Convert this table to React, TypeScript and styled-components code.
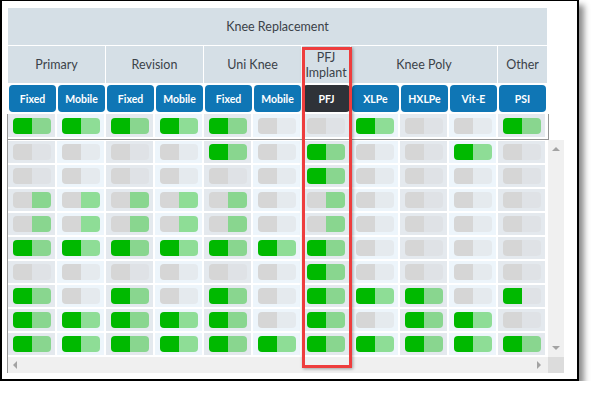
import React from 'react';
import styled, { createGlobalStyle } from 'styled-components';

type Mark = 'G' | 'O' | 'R' | 'L';

interface Group {
  label: string;
  span: number;
}

interface Column {
  label: string;
  dark?: boolean;
}

const groups: Group[] = [
  { label: 'Primary', span: 2 },
  { label: 'Revision', span: 2 },
  { label: 'Uni Knee', span: 2 },
  { label: 'PFJ Implant', span: 1 },
  { label: 'Knee Poly', span: 3 },
  { label: 'Other', span: 1 },
];

const columns: Column[] = [
  { label: 'Fixed' },
  { label: 'Mobile' },
  { label: 'Fixed' },
  { label: 'Mobile' },
  { label: 'Fixed' },
  { label: 'Mobile' },
  { label: 'PFJ', dark: true },
  { label: 'XLPe' },
  { label: 'HXLPe' },
  { label: 'Vit-E' },
  { label: 'PSI' },
];

// G = both on, O = off, R = only second half, L = only first half
const pinnedRow = 'GGGGGOOGOOG';
const rows = [
  'OOOOGOGOOGO',
  'OOOOOOGOOOO',
  'RRRRROROOOO',
  'RRRRROROOOO',
  'GGGGGGGOOOO',
  'OOOOOOGOOOO',
  'GOGOGOGGGOL',
  'GGGGGOGOGGO',
  'GGGGGGGGGGG',
];

const GlobalStyle = createGlobalStyle`
  html, body {
    margin: 0;
    background: #fff;
  }
  body {
    font-family: Lato, "Open Sans", sans-serif;
  }
`;

const Frame = styled.div`
  position: relative;
  box-sizing: border-box;
  width: 579px;
  height: 381px;
  border: 2px solid #000;
  border-top-width: 1px;
  background: #fff;
  box-shadow: 5px 5px 6px rgba(0, 0, 0, 0.45);
  padding: 7px 0 0 5px;
`;

const Widget = styled.div`
  width: 557px;
`;

const Header = styled.div`
  margin-left: 1px;
  width: 539px;
  color: #3b4249;
  font-size: 12.5px;
`;

const TitleRow = styled.div`
  height: 37px;
  display: flex;
  align-items: center;
  justify-content: center;
  background: #d5dfe6;
  border-bottom: 1px solid #fff;
`;

const GroupRow = styled.div`
  display: grid;
  grid-template-columns: 98px 98px 98px 49px 147px 49px;
  height: 37px;
`;

const GroupCell = styled.div<{ $last?: boolean }>`
  box-sizing: border-box;
  display: flex;
  align-items: center;
  justify-content: center;
  text-align: center;
  line-height: 15px;
  background: #d5dfe6;
  border-right: ${p => (p.$last ? 'none' : '1px solid #fff')};
  padding: 0 6px;
`;

const ButtonRow = styled.div`
  display: grid;
  grid-template-columns: repeat(11, 49px);
  padding: 2px 0;
`;

const TypeButton = styled.div<{ $dark?: boolean }>`
  margin: 0 1px;
  height: 27px;
  border-radius: 4px;
  background: ${p => (p.$dark ? '#2f3238' : '#0f76b5')};
  color: #fff;
  font-size: 10.5px;
  font-weight: 700;
  display: flex;
  align-items: center;
  justify-content: center;
`;

const PinnedBox = styled.div`
  width: 540px;
  border: 1px solid #959595;
  border-top: none;
  padding-bottom: 2px;
`;

const CellGrid = styled.div`
  display: grid;
  grid-template-columns: repeat(11, 47px);
  grid-auto-rows: 22px;
  gap: 2px;
`;

const PinnedGrid = styled(CellGrid)`
  grid-auto-rows: 23px;
`;

const Cell = styled.div<{ $shade: boolean }>`
  display: flex;
  align-items: center;
  justify-content: center;
  background: ${p => (p.$shade ? '#e4e9ee' : '#edf5fb')};
`;

const Toggle = styled.div`
  display: flex;
  width: 38px;
  height: 16px;
  border-radius: 4px;
  overflow: hidden;
`;

const Half = styled.div<{ $lit: boolean; $side: 'a' | 'b' }>`
  flex: 1;
  background: ${p =>
    p.$side === 'a'
      ? p.$lit ? '#00b900' : '#d6d6d6'
      : p.$lit ? 'rgba(0, 185, 0, 0.4)' : 'rgba(215, 215, 215, 0.35)'};
`;

const Body = styled.div`
  display: flex;
  flex-direction: column;
`;

const BodyMain = styled.div`
  display: flex;
  height: 217px;
`;

const DataArea = styled.div`
  width: 540px;
  border-left: 1px solid #959595;
  padding-top: 1px;
  overflow: hidden;
`;

const VScroll = styled.div`
  width: 16px;
  background: #f0f0f0;
  display: flex;
  flex-direction: column;
  align-items: center;
  justify-content: space-between;
  padding: 7px 0;
  box-sizing: border-box;
`;

const HRow = styled.div`
  display: flex;
  height: 16px;
`;

const HScroll = styled.div`
  width: 540px;
  border-left: 1px solid #959595;
  background: #f0f0f0;
  display: flex;
  align-items: center;
  justify-content: space-between;
  padding: 0 7px 0 5px;
  box-sizing: content-box;
  width: 528px;
`;

const Corner = styled.div`
  width: 16px;
  background: #dcdcdc;
`;

const Arrow = styled.div<{ $dir: 'up' | 'down' | 'left' | 'right' }>`
  width: 0;
  height: 0;
  ${p => {
    const c = '#a3a3a3';
    switch (p.$dir) {
      case 'up':
        return `border-left: 4px solid transparent; border-right: 4px solid transparent; border-bottom: 4px solid ${c};`;
      case 'down':
        return `border-left: 4px solid transparent; border-right: 4px solid transparent; border-top: 4px solid ${c};`;
      case 'left':
        return `border-top: 4px solid transparent; border-bottom: 4px solid transparent; border-right: 4px solid ${c};`;
      default:
        return `border-top: 4px solid transparent; border-bottom: 4px solid transparent; border-left: 4px solid ${c};`;
    }
  }}
`;

const Highlight = styled.div`
  position: absolute;
  left: 300px;
  top: 46px;
  width: 50px;
  height: 321px;
  box-sizing: border-box;
  border: 3px solid #ee3d3d;
  box-shadow: 1px 1px 3px rgba(0, 0, 0, 0.35);
  pointer-events: none;
`;

const Switch: React.FC<{ mark: Mark }> = ({ mark }) => (
  <Toggle>
    <Half $side="a" $lit={mark === 'G' || mark === 'L'} />
    <Half $side="b" $lit={mark === 'G' || mark === 'R'} />
  </Toggle>
);

const renderRow = (row: string, key: string) =>
  row.split('').map((m, i) => (
    <Cell key={`${key}-${i}`} $shade={i % 2 === 0}>
      <Switch mark={m as Mark} />
    </Cell>
  ));

const App: React.FC = () => {
  return (
    <>
      <GlobalStyle />
      <Frame>
        <Widget>
          <Header>
            <TitleRow>Knee Replacement</TitleRow>
            <GroupRow>
              {groups.map((g, i) => (
                <GroupCell key={g.label} $last={i === groups.length - 1}>
                  {g.label}
                </GroupCell>
              ))}
            </GroupRow>
            <ButtonRow>
              {columns.map((c, i) => (
                <TypeButton key={i} $dark={c.dark}>
                  {c.label}
                </TypeButton>
              ))}
            </ButtonRow>
          </Header>
          <PinnedBox>
            <PinnedGrid>{renderRow(pinnedRow, 'pin')}</PinnedGrid>
          </PinnedBox>
          <Body>
            <BodyMain>
              <DataArea>
                <CellGrid>{rows.map((r, i) => renderRow(r, `r${i}`))}</CellGrid>
              </DataArea>
              <VScroll>
                <Arrow $dir="up" />
                <Arrow $dir="down" />
              </VScroll>
            </BodyMain>
            <HRow>
              <HScroll>
                <Arrow $dir="left" />
                <Arrow $dir="right" />
              </HScroll>
              <Corner />
            </HRow>
          </Body>
        </Widget>
        <Highlight />
      </Frame>
    </>
  );
};

export default App;
